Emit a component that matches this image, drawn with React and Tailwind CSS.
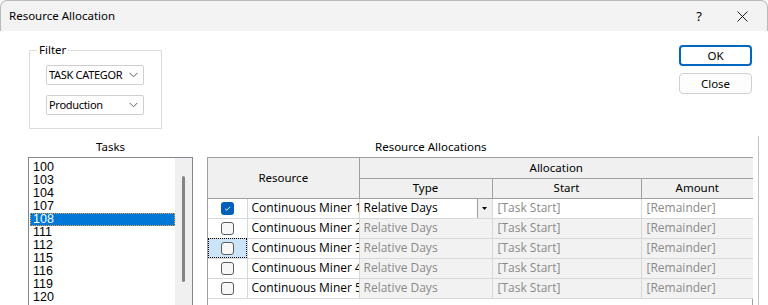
import React from "react";

const tasks = ["100", "103", "104", "107", "108", "111", "112", "115", "116", "119", "120"];

const rows = [1, 2, 3, 4, 5].map((n) => ({
  name: `Continuous Miner ${n}`,
  checked: n === 1,
  active: n === 1,
  focus: n === 3,
}));

const Chevron = () => (
  <svg width="9" height="6" viewBox="0 0 9 6" className="shrink-0">
    <path d="M0.5 0.8 L4.5 4.8 L8.5 0.8" fill="none" stroke="#606060" strokeWidth="1" />
  </svg>
);

const Select = ({ value }) => (
  <div className="flex items-center w-[98px] h-[20px] border border-[#cfcfcf] rounded-[2px] pl-[2px] pr-[5px] bg-white">
    <span className="w-[80px] text-[11px] tracking-[-0.3px] text-black whitespace-nowrap overflow-hidden">{value}</span>
    <span className="ml-auto flex">
      <Chevron />
    </span>
  </div>
);

const Checkbox = ({ checked }) =>
  checked ? (
    <div className="w-[13px] h-[13px] rounded-[3px] bg-[#005fb8] flex items-center justify-center">
      <svg width="9" height="9" viewBox="0 0 9 9">
        <path d="M2 4.6 L3.8 6.3 L7 2.8" fill="none" stroke="#ffffff" strokeWidth="0.9" />
      </svg>
    </div>
  ) : (
    <div className="w-[13px] h-[13px] rounded-[3px] border border-[#5c5c5c] bg-[#f7f7f7]" />
  );

const App = () => {
  return (
    <div
      className="w-[768px] h-[305px] overflow-hidden bg-white text-black text-[11.5px]"
      style={{ fontFamily: '"Noto Sans", "Open Sans", sans-serif' }}
    >
      {/* title bar */}
      <div className="h-[31px] bg-[#f3f3f3] border-t border-x border-[#b9b9b9] rounded-t-[7px] flex items-center pl-[8px]">
        <span className="text-[11.5px] leading-none">Resource Allocation</span>
        <span className="ml-auto mr-[35px] text-[13px] leading-none">?</span>
        <svg width="11" height="11" viewBox="0 0 11 11" className="mr-[19px]">
          <path d="M0.5 0.5 L10.5 10.5 M10.5 0.5 L0.5 10.5" stroke="#1a1a1a" strokeWidth="1" />
        </svg>
      </div>

      {/* top row */}
      <div className="flex items-start">
        <div className="relative ml-[29px] mt-[19px] w-[133px] h-[79px] border border-[#dcdcdc]">
          <span className="absolute -top-[9px] left-[7px] bg-white px-[2px] text-[11.5px] leading-[16px]">
            Filter
          </span>
          <div className="flex flex-col gap-[10px] pl-[16px] pt-[14px]">
            <Select value="TASK CATEGOR" />
            <Select value="Production" />
          </div>
        </div>

        <div className="ml-auto mr-[16px] mt-[14px] flex flex-col gap-[7px]">
          <div className="w-[73px] h-[21px] border-2 border-[#0067c0] rounded-[4px] flex items-center justify-center text-[11.5px]">
            OK
          </div>
          <div className="w-[73px] h-[21px] border border-[#d0d0d0] rounded-[4px] bg-[#fdfdfd] flex items-center justify-center text-[11.5px]">
            Close
          </div>
        </div>
      </div>

      {/* lists row */}
      <div className="flex mt-[7px]">
        <div className="ml-[28px] w-[165px] flex flex-col">
          <div className="h-[21px] text-center leading-[21px]">Tasks</div>
          <div className="h-[160px] border border-[#828790] flex pt-[3px] pl-[1px]">
            <div className="flex-1 flex flex-col" style={{ fontFamily: '"Liberation Sans", sans-serif' }}>
              {tasks.map((t) => (
                <div
                  key={t}
                  className={
                    t === "108"
                      ? "h-[13px] leading-[13px] pl-[3px] bg-[#0078d7] text-white outline outline-1 outline-dotted outline-[#f0a040] -outline-offset-1 text-[12.5px]"
                      : "h-[13px] leading-[13px] pl-[3px] text-[12.5px]"
                  }
                >
                  {t}
                </div>
              ))}
            </div>
            <div className="w-[17px] -mt-[3px] bg-[#f0f0f0] flex justify-center">
              <div className="w-[3px] h-[106px] mt-[18px] rounded-full bg-[#858585]" />
            </div>
          </div>
        </div>

        <div className="ml-[14px] w-[552px] border-r border-[#c4c4c4] flex flex-col">
          <div className="h-[21px] pl-[168px] leading-[21px]">Resource Allocations</div>
          <div className="w-[546px] h-[160px] border-l border-r border-t border-[#a0a0a0]">
            <table className="table-fixed border-collapse w-[545px]">
              <colgroup>
                <col className="w-[39px]" />
                <col className="w-[112px]" />
                <col className="w-[133px]" />
                <col className="w-[149px]" />
                <col className="w-[112px]" />
              </colgroup>
              <thead>
                <tr className="h-[20px] bg-[#f0f0f0]">
                  <th colSpan={2} rowSpan={2} className="font-normal text-[11.5px] border-r border-b border-[#a0a0a0] text-center">
                    Resource
                  </th>
                  <th colSpan={3} className="font-normal text-[11.5px] border-b border-[#a0a0a0] text-center">
                    Allocation
                  </th>
                </tr>
                <tr className="h-[20px] bg-[#f0f0f0]">
                  <th className="font-normal text-[11.5px] border-r border-b border-[#a0a0a0]">Type</th>
                  <th className="font-normal text-[11.5px] border-r border-b border-[#a0a0a0]">Start</th>
                  <th className="font-normal text-[11.5px] border-b border-[#a0a0a0]">Amount</th>
                </tr>
              </thead>
              <tbody style={{ fontFamily: '"Open Sans", sans-serif' }}>
                {rows.map((r) => {
                  const bg = r.active ? "bg-white" : "bg-[#f2f2f2]";
                  return (
                    <tr key={r.name} className="h-[20px]">
                      <td
                        className={
                          r.focus
                            ? "p-0 border-r border-b border-[#d8d8d8] bg-[#cce4f7] outline outline-1 outline-dotted outline-black -outline-offset-1"
                            : "p-0 border-r border-b border-[#d8d8d8] bg-white"
                        }
                      >
                        <div className="flex justify-center">
                          <Checkbox checked={r.checked} />
                        </div>
                      </td>
                      <td className="p-0 pl-[4px] border-r border-b border-[#d8d8d8] bg-white text-[12px] whitespace-nowrap overflow-hidden">
                        {r.name}
                      </td>
                      <td className={`p-0 border-r border-b border-[#d8d8d8] text-[12px] ${bg} ${r.active ? "text-black" : "text-[#8a8a8a]"}`}>
                        <div className="flex items-center h-[19px]">
                          <span className="pl-[4px] whitespace-nowrap">Relative Days</span>
                          {r.active && (
                            <div className="ml-auto w-[15px] h-[19px] bg-[#f0f0f0] border-l border-[#a0a0a0] flex items-center justify-center">
                              <svg width="5" height="3" viewBox="0 0 5 3">
                                <path d="M0 0 L5 0 L2.5 3 Z" fill="#000" />
                              </svg>
                            </div>
                          )}
                        </div>
                      </td>
                      <td className={`p-0 pl-[5px] border-r border-b border-[#d8d8d8] text-[12px] whitespace-nowrap text-[#8a8a8a] ${bg}`}>
                        [Task Start]
                      </td>
                      <td className={`p-0 pl-[5px] border-b border-[#d8d8d8] text-[12px] whitespace-nowrap text-[#8a8a8a] ${bg}`}>
                        [Remainder]
                      </td>
                    </tr>
                  );
                })}
              </tbody>
            </table>
          </div>
        </div>
      </div>
    </div>
  );
};

export default App;
